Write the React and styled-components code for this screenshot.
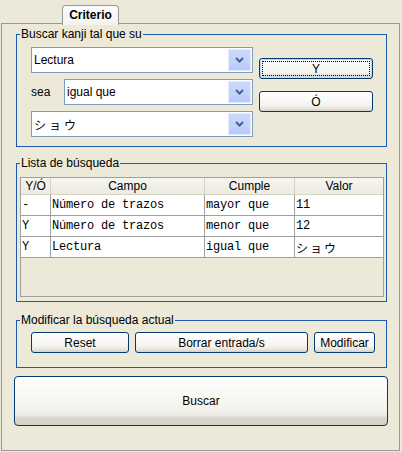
import React from "react";
import styled, { createGlobalStyle } from "styled-components";

const Global = createGlobalStyle`
  html, body { margin: 0; padding: 0; background: #ECE9D8; }
  body { font-family: "Liberation Sans", Arial, sans-serif; font-size: 12px; color: #000; }
  * { box-sizing: border-box; }
`;

const Window = styled.div`
  width: 402px;
  height: 452px;
  background: #ECE9D8;
  display: flex;
  flex-direction: column;
  padding-top: 5px;
`;

const TabStrip = styled.div`
  display: flex;
  padding-left: 62px;
  height: 18px;
`;

const Tab = styled.div`
  position: relative;
  z-index: 1;
  width: 57px;
  height: 20px;
  border: 1px solid #919B9C;
  border-bottom: none;
  border-radius: 4px 4px 0 0;
  background: linear-gradient(#FCFCFE, #F4F3EE);
  font-weight: bold;
  display: flex;
  align-items: center;
  justify-content: center;
  padding-bottom: 1px;
`;

const Panel = styled.div`
  margin-left: 1px;
  width: 399px;
  height: 428px;
  border: 1px solid #919B9C;
  background: #ECE9D8;
  display: flex;
  flex-direction: column;
  padding: 0 12px 0 14px;
`;

const Group = styled.fieldset`
  margin: ${p => p.$top}px 0 0 0;
  padding: ${p => p.$pt}px 13px ${p => p.$pb}px ${p => p.$pl}px;
  border: 1px solid #1D5AAB;
  min-width: 0;
`;

const Legend = styled.legend`
  margin-left: ${p => -(p.$pl - 3)}px;
  padding: 0 1px;
  height: 14px;
  line-height: 14px;
  font-size: 12px;
`;

const SearchBody = styled.div`
  display: flex;
  gap: 6px;
`;

const ComboColumn = styled.div`
  display: flex;
  flex-direction: column;
  gap: 6px;
  width: 222px;
`;

const ComboRow = styled.div`
  display: flex;
  align-items: center;
  height: 26px;
`;

const Label = styled.span`
  width: 33px;
`;

const Combo = styled.div`
  flex: 1;
  height: 26px;
  border: 1px solid #7F9DB9;
  background: #fff;
  display: flex;
  align-items: stretch;
`;

const ComboText = styled.div`
  flex: 1;
  display: flex;
  align-items: center;
  padding-left: 2px;
  font-family: ${p => (p.$kana ? '"Noto Sans CJK JP", sans-serif' : '"Liberation Sans", Arial, sans-serif')};
  letter-spacing: ${p => (p.$kana ? "3px" : "0")};
  font-size: 12px;
`;

const DropButton = styled.div`
  width: 23px;
  margin: 1px;
  border: 1px solid #E1E9FD;
  background: linear-gradient(#CCDAFD, #B9CBF8);
  display: flex;
  align-items: center;
  justify-content: center;
`;

const ButtonColumn = styled.div`
  display: flex;
  flex-direction: column;
  gap: 12px;
  padding-top: 11px;
  width: 114px;
`;

const XPButton = styled.button`
  width: ${p => p.$w || "auto"};
  height: ${p => p.$h || 21}px;
  border: 1px solid #003C74;
  border-radius: 3px;
  background: linear-gradient(#FFFFFF 0%, #F4F3EE 70%, #E4E1D8 90%, #D6D0C5 100%);
  font-family: "Liberation Sans", Arial, sans-serif;
  font-size: ${p => p.$fs || 12}px;
  color: #000;
  padding: 0;
  position: relative;
  display: flex;
  align-items: center;
  justify-content: center;
  flex-shrink: 0;
  box-shadow: ${p => (p.$focus ? "inset 0 0 0 1px #BCD4F6" : "none")};
`;

const FocusRing = styled.span`
  position: absolute;
  inset: 2px;
  border: 1px dotted #000;
`;

const Table = styled.div`
  height: 120px;
  border: 1px solid #A0A0A0;
  background: #ECE9D8;
  display: flex;
  flex-direction: column;
  margin: 0 -11px 0 -11px;
`;

const Row = styled.div`
  display: grid;
  grid-template-columns: 30px 154px 90px 1fr;
  height: ${p => (p.$head ? 17 : 21)}px;
  flex-shrink: 0;
  background: ${p => (p.$head ? "linear-gradient(#F6F5F0, #EBEAE3)" : "#fff")};
  border-bottom: 1px solid ${p => (p.$head ? "#D6D3C4" : "#A0A0A0")};
`;

const HeadCell = styled.div`
  display: flex;
  align-items: center;
  justify-content: center;
  border-right: 1px solid #D6D3C4;
  font-size: 12px;
  &:last-child { border-right: none; }
`;

const Cell = styled.div`
  display: flex;
  align-items: center;
  padding-left: 1px;
  border-right: 1px solid #A0A0A0;
  font-family: ${p => (p.$kana ? '"Noto Sans CJK JP", sans-serif' : '"Liberation Mono", "DejaVu Sans Mono", monospace')};
  letter-spacing: ${p => (p.$kana ? "2px" : "-0.2px")};
  font-size: 12px;
  &:last-child { border-right: none; }
`;

const ButtonRow = styled.div`
  display: flex;
  gap: 6px;
`;

const BigButton = styled(XPButton)`
  margin: 8px 0 0 -2px;
  width: 374px;
  height: 50px;
  border-radius: 4px;
  background: linear-gradient(#FFFFFF 0%, #F5F4EF 60%, #ECEBE5 80%, #DCD8CE 84%, #D6D0C5 100%);
`;

function Chevron() {
  return (
    <svg width="9" height="6" viewBox="0 0 9 6">
      <path d="M1 1 L4.5 4.5 L8 1" fill="none" stroke="#4D6185" strokeWidth="2" />
    </svg>
  );
}

function ComboBox({ value, kana }) {
  return (
    <Combo>
      <ComboText $kana={kana}>{value}</ComboText>
      <DropButton>
        <Chevron />
      </DropButton>
    </Combo>
  );
}

const rows = [
  ["-", "Número de trazos", "mayor que", "11"],
  ["Y", "Número de trazos", "menor que", "12"],
  ["Y", "Lectura", "igual que", "ショウ"],
];

export default function App() {
  return (
    <Window>
      <Global />
      <TabStrip>
        <Tab>Criterio</Tab>
      </TabStrip>
      <Panel>
        <Group $top={3} $pt={6} $pb={9} $pl={14}>
          <Legend $pl={14}>Buscar kanji tal que su</Legend>
          <SearchBody>
            <ComboColumn>
              <ComboRow>
                <ComboBox value="Lectura" />
              </ComboRow>
              <ComboRow>
                <Label>sea</Label>
                <ComboBox value="igual que" />
              </ComboRow>
              <ComboRow>
                <ComboBox value="ショウ" kana />
              </ComboRow>
            </ComboColumn>
            <ButtonColumn>
              <XPButton $w="114px" $focus>
                Y
                <FocusRing />
              </XPButton>
              <XPButton $w="114px">Ó</XPButton>
            </ButtonColumn>
          </SearchBody>
        </Group>

        <Group $top={9} $pt={7} $pb={4} $pl={14}>
          <Legend $pl={14}>Lista de búsqueda</Legend>
          <Table>
            <Row $head>
              <HeadCell>Y/Ó</HeadCell>
              <HeadCell>Campo</HeadCell>
              <HeadCell>Cumple</HeadCell>
              <HeadCell>Valor</HeadCell>
            </Row>
            {rows.map((r, i) => (
              <Row key={i}>
                <Cell>{r[0]}</Cell>
                <Cell>{r[1]}</Cell>
                <Cell>{r[2]}</Cell>
                <Cell $kana={r[3] === "ショウ"}>{r[3]}</Cell>
              </Row>
            ))}
          </Table>
        </Group>

        <Group $top={11} $pt={5} $pb={14} $pl={14}>
          <Legend $pl={14}>Modificar la búsqueda actual</Legend>
          <ButtonRow>
            <XPButton $w="98px">Reset</XPButton>
            <XPButton $w="173px">Borrar entrada/s</XPButton>
            <XPButton $w="61px">Modificar</XPButton>
          </ButtonRow>
        </Group>

        <BigButton>Buscar</BigButton>
      </Panel>
    </Window>
  );
}
